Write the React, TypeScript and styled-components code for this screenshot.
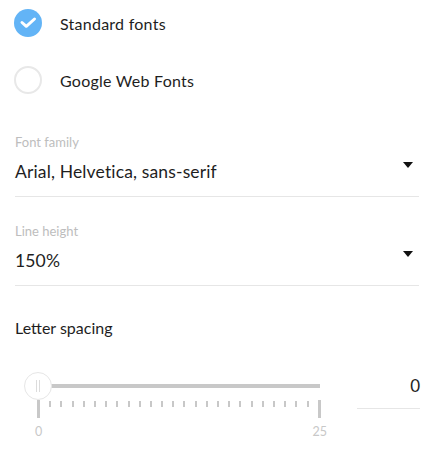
import React from "react";
import styled, { createGlobalStyle } from "styled-components";

const Global = createGlobalStyle`
  html, body { margin: 0; padding: 0; background: #fff; }
  body { font-family: "Lato", "Noto Sans", sans-serif; color: #1e1e1e; }
`;

const Page = styled.div`
  width: 404px;
  padding: 9px 14px 0 15px;
  display: flex;
  flex-direction: column;
`;

const RadioGroup = styled.div`
  display: flex;
  flex-direction: column;
  gap: 29px;
  margin-bottom: 14px;
`;

const RadioRow = styled.label`
  display: flex;
  align-items: center;
  gap: 18px;
  height: 28px;
  margin-left: -1px;
  font-size: 16px;
  letter-spacing: 0.25px;
  color: #1e1e1e;
`;

const Circle = styled.span<{ $checked?: boolean }>`
  width: 28px;
  height: 28px;
  box-sizing: border-box;
  border-radius: 50%;
  flex: none;
  display: flex;
  align-items: center;
  justify-content: center;
  background: ${(p) => (p.$checked ? "#63b4f6" : "#fff")};
  border: ${(p) => (p.$checked ? "none" : "2px solid #e8e8e8")};
`;

const Field = styled.div`
  padding-top: 26px;
  padding-bottom: 12px;
  border-bottom: 1px solid #e6e6e6;
`;

const FieldLabel = styled.div`
  font-size: 13px;
  line-height: 16px;
  color: #bdbdbd;
  margin-bottom: 10px;
`;

const ValueRow = styled.div`
  display: flex;
  justify-content: space-between;
  align-items: flex-start;
`;

const Value = styled.div`
  font-size: 17.5px;
  line-height: 24px;
  letter-spacing: 0.15px;
  color: #1e1e1e;
`;

const Caret = styled.span`
  width: 0;
  height: 0;
  margin-top: 2px;
  margin-right: 6px;
  border-left: 5px solid transparent;
  border-right: 5px solid transparent;
  border-top: 6px solid #111;
`;

const SectionTitle = styled.div`
  margin-top: 32px;
  font-size: 16px;
  line-height: 20px;
  color: #1e1e1e;
`;

const SliderRow = styled.div`
  margin-top: 34px;
  display: flex;
  align-items: flex-start;
`;

const Slider = styled.div`
  margin-left: 23px;
  width: 282px;
  display: flex;
  flex-direction: column;
`;

const TrackWrap = styled.div`
  position: relative;
  height: 28px;
  display: flex;
  align-items: center;
`;

const Track = styled.div`
  width: 100%;
  height: 4px;
  background: #c8c8c8;
`;

const Thumb = styled.div`
  position: absolute;
  left: -14px;
  top: 0;
  width: 28px;
  height: 28px;
  box-sizing: border-box;
  border-radius: 50%;
  background: #fff;
  border: 1px solid #e6e6e6;
  display: flex;
  align-items: center;
  justify-content: center;
  gap: 2px;
`;

const Grip = styled.span`
  width: 1px;
  height: 12px;
  background: #dcdcdc;
`;

const Ticks = styled.div`
  display: flex;
  justify-content: space-between;
  align-items: flex-start;
  margin: 0 -1px;
  height: 18px;
`;

const Tick = styled.span<{ $major?: boolean }>`
  width: ${(p) => (p.$major ? "3px" : "2px")};
  height: ${(p) => (p.$major ? "18px" : "6px")};
  margin-top: ${(p) => (p.$major ? "0" : "1px")};
  background: #c8c8c8;
`;

const TickLabels = styled.div`
  display: flex;
  justify-content: space-between;
  margin: 7px -7px 0 -3px;
  font-size: 12.5px;
  line-height: 14px;
  color: #c8c8c8;
`;

const NumberBox = styled.div`
  margin-left: auto;
  width: 63px;
  margin-right: -1px;
  text-align: right;
  font-size: 17px;
  line-height: 28px;
  padding-bottom: 8px;
  border-bottom: 1px solid #e6e6e6;
  color: #1e1e1e;
`;

const Check = () => (
  <svg width="28" height="28" viewBox="0 0 28 28">
    <path
      d="M8 13.5 L12.3 17.3 L20.5 10"
      fill="none"
      stroke="#fff"
      strokeWidth="3"
      strokeLinecap="round"
      strokeLinejoin="round"
    />
  </svg>
);

export default function App() {
  const ticks = Array.from({ length: 26 }, (_, i) => i);
  return (
    <>
      <Global />
      <Page>
        <RadioGroup>
          <RadioRow>
            <Circle $checked>
              <Check />
            </Circle>
            Standard fonts
          </RadioRow>
          <RadioRow>
            <Circle />
            Google Web Fonts
          </RadioRow>
        </RadioGroup>

        <Field>
          <FieldLabel>Font family</FieldLabel>
          <ValueRow>
            <Value>Arial, Helvetica, sans-serif</Value>
            <Caret />
          </ValueRow>
        </Field>

        <Field>
          <FieldLabel>Line height</FieldLabel>
          <ValueRow>
            <Value>150%</Value>
            <Caret />
          </ValueRow>
        </Field>

        <SectionTitle>Letter spacing</SectionTitle>

        <SliderRow>
          <Slider>
            <TrackWrap>
              <Track />
              <Thumb>
                <Grip />
                <Grip />
              </Thumb>
            </TrackWrap>
            <Ticks>
              {ticks.map((i) => (
                <Tick key={i} $major={i === 0 || i === 25} />
              ))}
            </Ticks>
            <TickLabels>
              <span>0</span>
              <span>25</span>
            </TickLabels>
          </Slider>
          <NumberBox>0</NumberBox>
        </SliderRow>
      </Page>
    </>
  );
}
